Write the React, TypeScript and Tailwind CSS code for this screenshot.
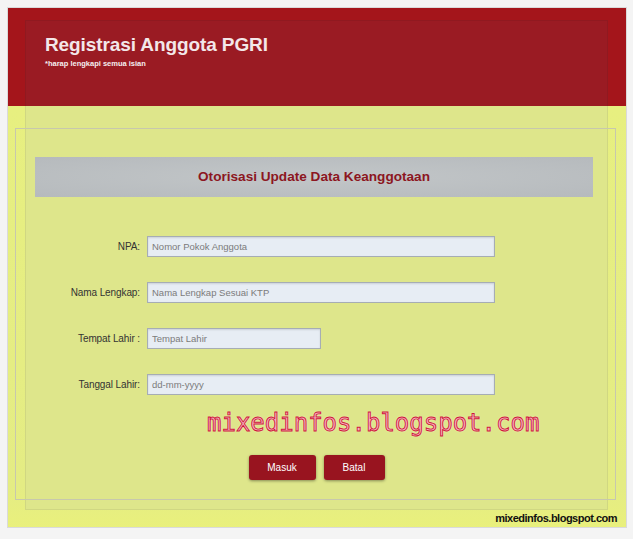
import React from "react";

type Field = { label: string; placeholder: string; width: string };

const fields: Field[] = [
  { label: "NPA:", placeholder: "Nomor Pokok Anggota", width: "w-[348px]" },
  { label: "Nama Lengkap:", placeholder: "Nama Lengkap Sesuai KTP", width: "w-[348px]" },
  { label: "Tempat Lahir :", placeholder: "Tempat Lahir", width: "w-[174px]" },
  { label: "Tanggal Lahir:", placeholder: "dd-mm-yyyy", width: "w-[348px]" },
];

function FormRow({ label, placeholder, width }: Field) {
  return (
    <div className="flex items-center gap-[7px] h-[21px]">
      <label className="w-[124px] text-right text-[10px] text-[#333] tracking-[-0.1px]">{label}</label>
      <input
        readOnly
        placeholder={placeholder}
        className={`${width} h-[21px] bg-[#e7edf4] border border-[#a6adb4] shadow-[inset_0_1px_2px_rgba(0,0,0,0.12)] px-[4px] text-[9.5px] text-[#555] placeholder:text-[#7b7b7b] outline-none`}
      />
    </div>
  );
}

export default function App() {
  return (
    <div className="min-h-[539px] bg-[#f4f4f4] pt-[7px] pl-[7px] font-['Liberation_Sans',Arial,sans-serif]">
      <div className="w-[620px] h-[521px] border border-[#dadada] bg-origin-border bg-[linear-gradient(to_bottom,#a4151b_0,#a4151b_99px,#e7ef80_99px,#e4ec84_480px,#e9f07c_100%)]">
        {/* inner panel */}
        <div className="ml-[17px] mt-[12px] w-[583px] h-[490px] border border-[#00000010] bg-origin-border bg-no-repeat bg-[linear-gradient(to_bottom,#9a1b23_0,#9a1b23_86px,#dee68b_86px,#dee68b_100%)]">
          <div className="h-[107px] pl-[19px] pt-[13px]">
            <h1 className="text-[19px] leading-[22px] font-bold text-[#f3e7e9] tracking-[-0.1px]">
              Registrasi Anggota PGRI
            </h1>
            <p className="mt-[3px] text-[7.5px] leading-[10px] font-bold text-[#f5eef0]">
              *harap lengkapi semua isian
            </p>
          </div>

          {/* form box */}
          <div className="-ml-[11px] w-[601px] h-[372px] border border-[#c7c8ad]">
            <div className="ml-[19px] mt-[28px] w-[558px] h-[40px] flex items-center justify-center bg-[radial-gradient(ellipse_at_center,#c2c6c8_0%,#b6babd_100%)]">
              <h2 className="text-[13.6px] font-bold text-[#8c1621]">Otorisasi Update Data Keanggotaan</h2>
            </div>

            <div className="mt-[39px] flex flex-col gap-[25px]">
              {fields.map((f) => (
                <FormRow key={f.label} {...f} />
              ))}
            </div>

            <div className="mt-[16px] h-[24px] pl-[191px] font-['DejaVu_Sans_Mono',monospace] text-[24px] leading-[24px] text-[#f6b3c0] [-webkit-text-stroke:0.9px_#cf1638] [text-shadow:0_0_2px_rgba(255,255,255,0.8)]">
              mixedinfos.blogspot.com
            </div>

            <div className="mt-[20px] flex justify-center gap-[8px] pl-[2px]">
              <button className="w-[67px] h-[25px] rounded-[3px] bg-[#98141f] text-white text-[10px] shadow-[0_1px_3px_rgba(0,0,0,0.4)]">
                Masuk
              </button>
              <button className="w-[61px] h-[25px] rounded-[3px] bg-[#98141f] text-white text-[10px] shadow-[0_1px_3px_rgba(0,0,0,0.4)]">
                Batal
              </button>
            </div>
          </div>
        </div>

        <div className="h-[16px] pr-[9px] text-right text-[11px] leading-[16px] font-bold text-[#111] tracking-[-0.5px]">
          mixedinfos.blogspot.com
        </div>
      </div>
    </div>
  );
}
